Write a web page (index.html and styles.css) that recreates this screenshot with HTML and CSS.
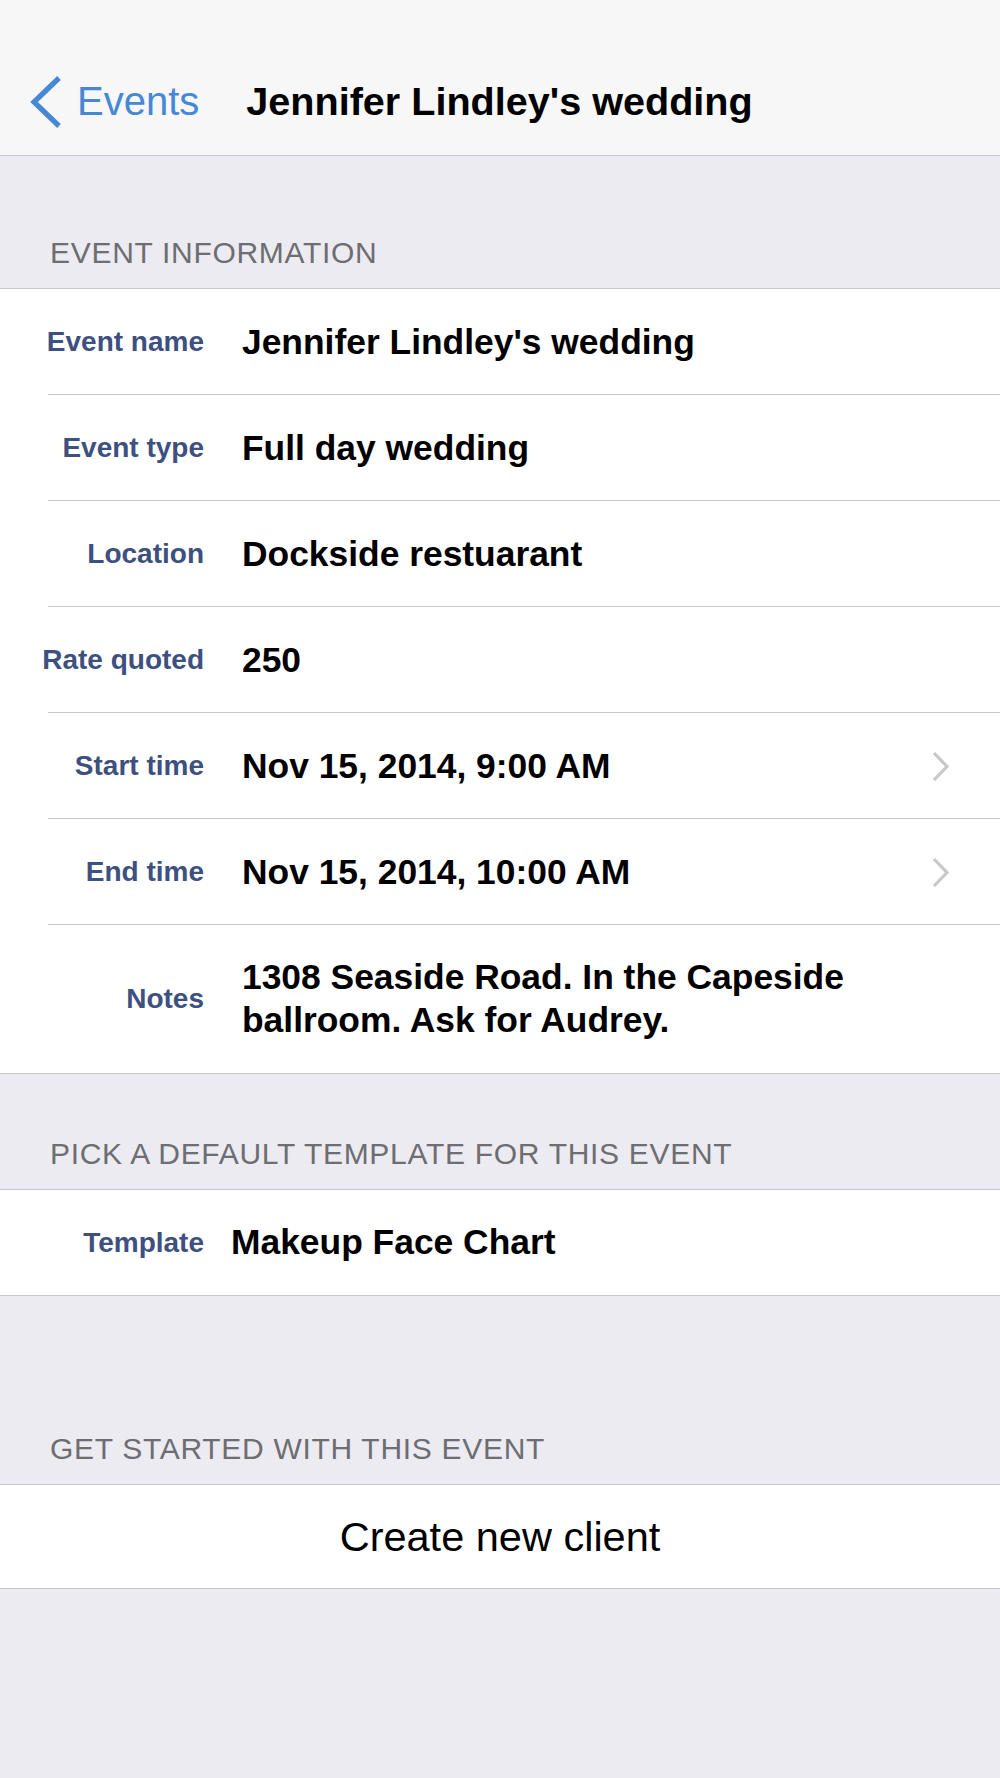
FILE: index.html
```html
<!DOCTYPE html>
<html lang="en">
<head>
<meta charset="utf-8">
<title>Jennifer Lindley's wedding</title>
<link rel="stylesheet" href="styles.css">
</head>
<body>
<div class="screen">
  <header class="nav">
    <div class="back">
      <svg class="back-chevron" width="32" height="52" viewBox="0 0 32 52" aria-hidden="true">
        <polyline points="29,2 4,26 29,50" fill="none" stroke="#4687d6" stroke-width="5.2" stroke-linecap="butt" stroke-linejoin="miter"/>
      </svg>
      <span class="back-label">Events</span>
    </div>
    <h1 class="nav-title">Jennifer Lindley's wedding</h1>
  </header>

  <div class="section-header h-first">EVENT INFORMATION</div>
  <div class="group">
    <div class="row sep">
      <div class="label">Event name</div>
      <div class="value">Jennifer Lindley's wedding</div>
    </div>
    <div class="row sep">
      <div class="label">Event type</div>
      <div class="value">Full day wedding</div>
    </div>
    <div class="row sep">
      <div class="label">Location</div>
      <div class="value">Dockside restuarant</div>
    </div>
    <div class="row sep">
      <div class="label">Rate quoted</div>
      <div class="value">250</div>
    </div>
    <div class="row sep">
      <div class="label">Start time</div>
      <div class="value">Nov 15, 2014, 9:00 AM</div>
      <svg class="disclosure" width="20" height="31" viewBox="0 0 20 31" aria-hidden="true">
        <polyline points="3,2 16,15.5 3,29" fill="none" stroke="#c7c7cc" stroke-width="3.2"/>
      </svg>
    </div>
    <div class="row sep">
      <div class="label">End time</div>
      <div class="value">Nov 15, 2014, 10:00 AM</div>
      <svg class="disclosure" width="20" height="31" viewBox="0 0 20 31" aria-hidden="true">
        <polyline points="3,2 16,15.5 3,29" fill="none" stroke="#c7c7cc" stroke-width="3.2"/>
      </svg>
    </div>
    <div class="row row-notes">
      <div class="label">Notes</div>
      <div class="value value-notes">1308 Seaside Road. In the Capeside ballroom. Ask for Audrey.</div>
    </div>
  </div>

  <div class="section-header h-second">PICK A DEFAULT TEMPLATE FOR THIS EVENT</div>
  <div class="group">
    <div class="row row-template">
      <div class="label">Template</div>
      <div class="value value-template">Makeup Face Chart</div>
    </div>
  </div>

  <div class="section-header h-third">GET STARTED WITH THIS EVENT</div>
  <div class="group">
    <div class="row row-action">
      <div class="action">Create new client</div>
    </div>
  </div>
</div>
</body>
</html>
```
FILE: styles.css
```css
* {
  box-sizing: border-box;
}

html, body {
  margin: 0;
  padding: 0;
}

body {
  background: #ebebf1;
  font-family: "Liberation Sans", Arial, "Helvetica Neue", sans-serif;
  color: #000;
}

.screen {
  width: 1000px;
  min-height: 1778px;
  background: #ebebf1;
}

/* Navigation bar */
.nav {
  height: 156px;
  padding: 48px 0 0 30px;
  background: #f7f7f7;
  border-bottom: 1px solid #c8c7cc;
  display: flex;
  align-items: center;
}

.back {
  display: flex;
  align-items: center;
  gap: 15px;
}

.back-chevron {
  display: block;
  flex-shrink: 0;
}

.back-label {
  font-size: 40px;
  color: #4687d6;
}

.nav-title {
  margin: 0 0 0 47px;
  font-size: 39.6px;
  font-weight: bold;
  color: #000;
}

/* Section headers */
.section-header {
  display: flex;
  align-items: flex-end;
  padding: 0 0 17px 50px;
  font-size: 30px;
  letter-spacing: 0.7px;
  line-height: 36px;
  color: #6d6d72;
  border-bottom: 1px solid #c8c7cc;
}

.h-first {
  height: 133px;
}

.h-second {
  height: 116px;
}

.h-third {
  height: 189px;
}

/* Grouped table */
.group {
  background: #fff;
  border-bottom: 1px solid #c8c7cc;
}

.row {
  height: 106px;
  display: flex;
  align-items: center;
  padding-right: 49px;
}

.row.sep {
  background-image: linear-gradient(#c8c7cc, #c8c7cc);
  background-repeat: no-repeat;
  background-position: 48px 100%;
  background-size: calc(100% - 48px) 1px;
}

.label {
  width: 204px;
  flex-shrink: 0;
  text-align: right;
  font-size: 28px;
  font-weight: bold;
  color: #3d5080;
  white-space: nowrap;
}

.value {
  flex: 1;
  margin-left: 38px;
  font-size: 35.4px;
  font-weight: bold;
  color: #000;
}

.disclosure {
  display: block;
  flex-shrink: 0;
  margin-left: auto;
}

.row-notes {
  height: 148px;
  padding-right: 70px;
}

.value-notes {
  line-height: 43px;
}

.row-template {
  height: 105px;
}

.value-template {
  margin-left: 27px;
}

.row-action {
  height: 103px;
  justify-content: center;
  padding-right: 0;
}

.action {
  font-size: 41.5px;
  color: #000;
}
```
